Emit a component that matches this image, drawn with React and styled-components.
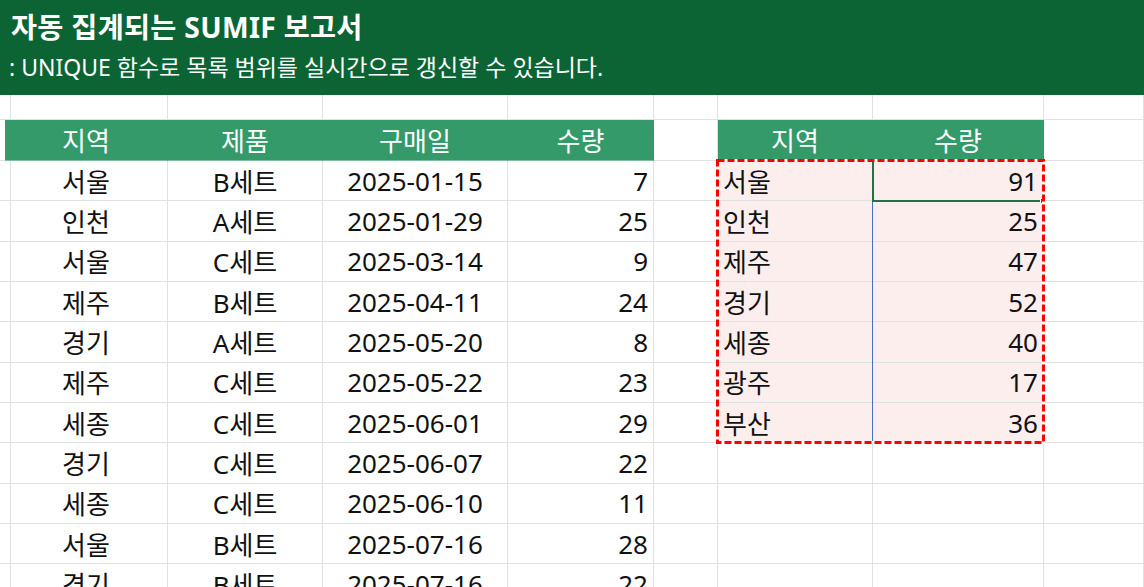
import React from 'react';
import styled, { createGlobalStyle } from 'styled-components';

const GlobalStyle = createGlobalStyle`
  * { box-sizing: border-box; }
  html, body {
    margin: 0;
    padding: 0;
    background: #ffffff;
    overflow: hidden;
  }
  body {
    font-family: "Noto Sans", "Noto Sans CJK KR", sans-serif;
  }
`;

const Page = styled.div`
  width: 1144px;
  height: 587px;
  overflow: hidden;
  background: #fff;
`;

const Banner = styled.header`
  height: 95px;
  background: #0c6434;
  color: #fff;
  padding: 8px 0 0 11px;
`;

const Title = styled.h1`
  margin: 0;
  font-size: 28.3px;
  font-weight: 700;
  line-height: 39px;
  letter-spacing: 0.3px;
`;

const Subtitle = styled.p`
  margin: 0;
  font-size: 23px;
  line-height: 40px;
  margin-left: -2px;
`;

const Sheet = styled.div`
  position: relative;
  display: grid;
  grid-template-columns: 5px 163px 155px 185px 146px 64px 155px 171px 1fr;
  grid-template-rows: 25px 41px;
  grid-auto-rows: 40.35px;
`;

const Cell = styled.div`
  border-right: 1px solid ${p => p.$line || '#e1e1e1'};
  border-bottom: 1px solid ${p => p.$line || '#e1e1e1'};
  background: ${p => p.$bg || 'transparent'};
  display: flex;
  align-items: center;
  justify-content: ${p => p.$align === 'right' ? 'flex-end' : p.$align === 'left' ? 'flex-start' : 'center'};
  padding: 0 5px;
  font-size: 26px;
  color: #111;
  white-space: nowrap;
`;

const HeadCell = styled(Cell)`
  background: #359a69;
  border-right-color: #359a69;
  border-bottom-color: #7fbf9f;
  color: #fff;
`;

const Marquee = styled.svg`
  position: absolute;
  left: 716px;
  top: 64px;
  width: 329px;
  height: 285px;
  pointer-events: none;
  overflow: visible;
`;

const ActiveCell = styled.div`
  position: absolute;
  left: 872px;
  top: 64px;
  width: 172px;
  height: 43px;
  border: 2px solid #217346;
  pointer-events: none;
`;

const FillHandle = styled.div`
  position: absolute;
  right: -4px;
  bottom: -4px;
  width: 6px;
  height: 6px;
  background: #217346;
  border: 1px solid #fff;
`;

const SpillLine = styled.div`
  position: absolute;
  left: 872px;
  top: 106px;
  width: 1px;
  height: 242px;
  background: #4472c4;
  pointer-events: none;
`;

const sales = [
  ['서울', 'B세트', '2025-01-15', 7],
  ['인천', 'A세트', '2025-01-29', 25],
  ['서울', 'C세트', '2025-03-14', 9],
  ['제주', 'B세트', '2025-04-11', 24],
  ['경기', 'A세트', '2025-05-20', 8],
  ['제주', 'C세트', '2025-05-22', 23],
  ['세종', 'C세트', '2025-06-01', 29],
  ['경기', 'C세트', '2025-06-07', 22],
  ['세종', 'C세트', '2025-06-10', 11],
  ['서울', 'B세트', '2025-07-16', 28],
  ['경기', 'B세트', '2025-07-16', 22],
];

const summary = [
  ['서울', 91],
  ['인천', 25],
  ['제주', 47],
  ['경기', 52],
  ['세종', 40],
  ['광주', 17],
  ['부산', 36],
];

const PINK = '#fdeeee';

export default function App() {
  return (
    <Page>
      <GlobalStyle />
      <Banner>
        <Title>자동 집계되는 SUMIF 보고서</Title>
        <Subtitle>: UNIQUE 함수로 목록 범위를 실시간으로 갱신할 수 있습니다.</Subtitle>
      </Banner>
      <Sheet>
        {/* top partial row */}
        {Array.from({ length: 9 }).map((_, i) => <Cell key={'t' + i} />)}

        {/* header row */}
        <Cell />
        <HeadCell>지역</HeadCell>
        <HeadCell>제품</HeadCell>
        <HeadCell>구매일</HeadCell>
        <HeadCell>수량</HeadCell>
        <Cell />
        <HeadCell>지역</HeadCell>
        <HeadCell>수량</HeadCell>
        <Cell />

        {sales.map((row, i) => {
          const s = summary[i];
          return (
            <React.Fragment key={i}>
              <Cell />
              <Cell>{row[0]}</Cell>
              <Cell>{row[1]}</Cell>
              <Cell>{row[2]}</Cell>
              <Cell $align="right">{row[3]}</Cell>
              <Cell />
              <Cell $align="left" $bg={s ? PINK : undefined}>{s ? s[0] : ''}</Cell>
              <Cell $align="right" $bg={s ? PINK : undefined}>{s ? s[1] : ''}</Cell>
              <Cell />
            </React.Fragment>
          );
        })}

        <SpillLine />
        <ActiveCell>
          <FillHandle />
        </ActiveCell>
        <Marquee viewBox="0 0 329 285">
          <rect x="1.5" y="1.5" width="326" height="282" fill="none" stroke="#fff" strokeWidth="3" />
          <rect x="1.5" y="1.5" width="326" height="282" fill="none" stroke="#f00" strokeWidth="3" strokeDasharray="7 3" />
        </Marquee>
      </Sheet>
    </Page>
  );
}
